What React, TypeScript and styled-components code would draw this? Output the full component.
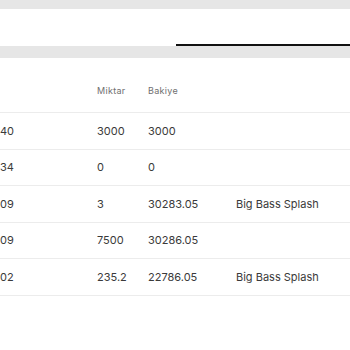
import styled, { createGlobalStyle } from "styled-components";

const GlobalStyle = createGlobalStyle`
  html, body {
    margin: 0;
    padding: 0;
    background: #ffffff;
  }
  body {
    font-family: Inter, "Noto Sans", "Liberation Sans", sans-serif;
    color: #333;
  }
`;

const Page = styled.div`
  width: 350px;
  height: 350px;
  overflow: hidden;
  display: flex;
  flex-direction: column;
  background: #fff;
`;

const TopStrip = styled.div`
  height: 9px;
  background: #e6e6e6;
  flex-shrink: 0;
`;

const TabBar = styled.div`
  height: 37px;
  display: flex;
  background: #fff;
  flex-shrink: 0;
`;

const Tab = styled.div<{ $active?: boolean; $width: string }>`
  flex: 0 0 ${(p) => p.$width};
  box-sizing: border-box;
  border-bottom: 2px solid ${(p) => (p.$active ? "#111" : "transparent")};
`;

const Divider = styled.div`
  height: 12px;
  background: #e6e6e6;
  flex-shrink: 0;
`;

const Grid = styled.div`
  display: flex;
  flex-direction: column;
`;

const Row = styled.div<{ $head?: boolean }>`
  display: grid;
  grid-template-columns: 97px 51px 88px 1fr;
  align-items: ${(p) => (p.$head ? "start" : "center")};
  box-sizing: border-box;
  height: ${(p) => (p.$head ? "55px" : "36.5px")};
  padding-top: ${(p) => (p.$head ? "27px" : "0")};
  border-bottom: 1px solid #ececec;
`;

const HeadCell = styled.div`
  font-size: 9px;
  line-height: 12px;
  color: #707070;
  letter-spacing: 0.3px;
`;

const Cell = styled.div`
  font-size: 11px;
  line-height: 14px;
  color: #3a3a3a;
  white-space: nowrap;
`;

const rows = [
  { time: "40", amount: "3000", balance: "3000", game: "" },
  { time: "34", amount: "0", balance: "0", game: "" },
  { time: "09", amount: "3", balance: "30283.05", game: "Big Bass Splash" },
  { time: "09", amount: "7500", balance: "30286.05", game: "" },
  { time: "02", amount: "235.2", balance: "22786.05", game: "Big Bass Splash" },
];

export default function App() {
  return (
    <>
      <GlobalStyle />
      <Page>
        <TopStrip />
        <TabBar>
          <Tab $width="176px" />
          <Tab $width="174px" $active />
        </TabBar>
        <Divider />
        <Grid>
          <Row $head>
            <HeadCell />
            <HeadCell>Miktar</HeadCell>
            <HeadCell>Bakiye</HeadCell>
            <HeadCell />
          </Row>
          {rows.map((r, i) => (
            <Row key={i}>
              <Cell>{r.time}</Cell>
              <Cell>{r.amount}</Cell>
              <Cell>{r.balance}</Cell>
              <Cell>{r.game}</Cell>
            </Row>
          ))}
        </Grid>
      </Page>
    </>
  );
}
